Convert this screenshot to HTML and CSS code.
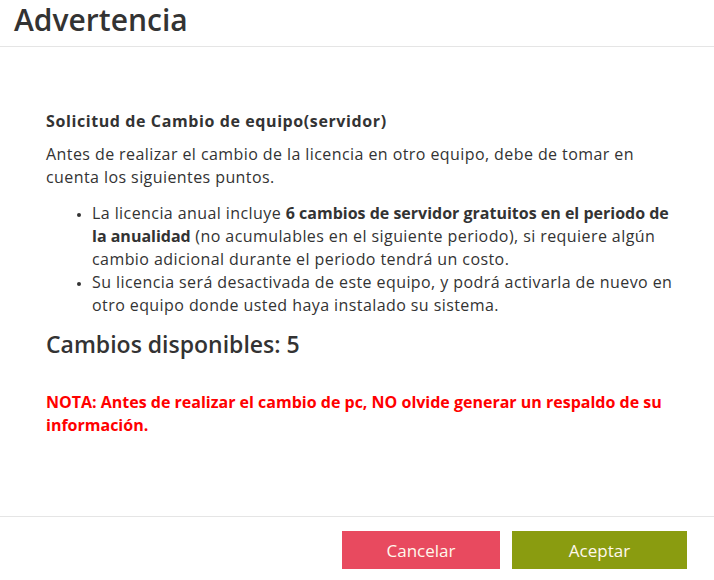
FILE: index.html
```html
<!DOCTYPE html>
<html lang="es">

<head>
    <meta charset="UTF-8">
    <meta name="viewport" content="width=device-width, initial-scale=1.0">
    <title>Advertencia</title>
    <link rel="stylesheet" href="styles.css">
</head>

<body>
    <div class="modal">
        <div class="modal-header">
            <h1>Advertencia</h1>
        </div>

        <div class="modal-body">
            <h3>Solicitud de Cambio de equipo(servidor)</h3>
            <p>Antes de realizar el cambio de la licencia en otro equipo, debe de tomar en cuenta los siguientes puntos.</p>
            <ul>
                <li>La licencia anual incluye <b>6 cambios de servidor gratuitos en el periodo de la anualidad</b> (no acumulables en el siguiente periodo), si requiere algún cambio adicional durante el periodo tendrá un costo.</li>
                <li>Su licencia será desactivada de este equipo, y podrá activarla de nuevo en otro equipo donde usted haya instalado su sistema.</li>
            </ul>
            <h2 class="disponibles">Cambios disponibles: 5</h2>
            <p class="nota">NOTA: Antes de realizar el cambio de pc, NO olvide generar un respaldo de su información.</p>
        </div>

        <div class="modal-footer">
            <button type="button" class="btn btn-cancel">Cancelar</button>
            <button type="button" class="btn btn-ok">Aceptar</button>
        </div>
    </div>
</body>

</html>
```

FILE: styles.css
```css
body {
    margin: 0;
    padding: 0;
    font-family: "Open Sans", "Noto Sans", Arial, sans-serif;
    color: #333;
    background-color: #fff;
}

.modal {
    display: flex;
    flex-direction: column;
    height: 580px;
}

.modal-header {
    height: 46px;
    padding: 0 14px;
    border-bottom: 1px solid #e5e5e5;
}

.modal-header h1 {
    margin: 0;
    font-size: 30px;
    font-weight: 600;
    line-height: 40px;
    color: #333;
}

.modal-body {
    flex: 1;
    padding: 62px 38px 0 46px;
    font-size: 16px;
    letter-spacing: 0.42px;
    line-height: 23px;
}

.modal-body h3 {
    margin: 0 0 10px 0;
    font-size: 16px;
    font-weight: 700;
    letter-spacing: 0.6px;
    line-height: 24px;
}

.modal-body p {
    margin: 0;
}

.modal-body ul {
    margin: 13px 0 0 0;
    padding-left: 46px;
}

.modal-body li::marker {
    font-size: 12px;
}

.modal-body ul b {
    font-weight: 700;
    letter-spacing: 0;
}

.disponibles {
    margin: 11px 0 0 0;
    font-size: 23px;
    font-weight: 600;
    letter-spacing: 0;
    line-height: 32px;
}

.nota {
    margin-top: 31px !important;
    color: #ff0000;
    font-size: 16px;
    font-weight: 700;
    letter-spacing: 0;
}

.modal-footer {
    display: flex;
    justify-content: flex-end;
    gap: 12px;
    padding: 14px 27px 11px 0;
    border-top: 1px solid #e5e5e5;
}

.btn {
    height: 38px;
    border: none;
    border-radius: 0;
    font-family: inherit;
    font-size: 17px;
    color: #fff8ec;
    cursor: pointer;
}

.btn-cancel {
    width: 158px;
    background-color: #e84a5f;
}

.btn-ok {
    width: 175px;
    background-color: #8a9c10;
}
```
